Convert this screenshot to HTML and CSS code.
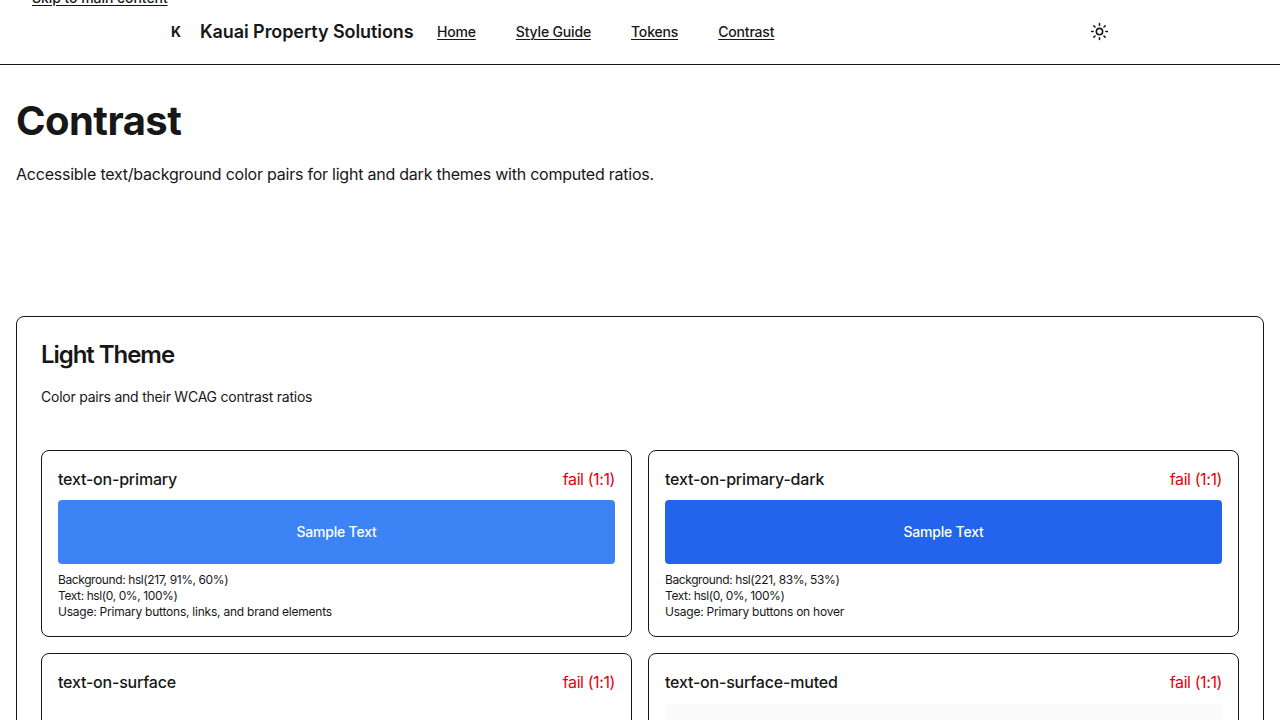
FILE: index.html
```html
<!DOCTYPE html>
<html lang="en">
<head>
<meta charset="utf-8">
<title>Contrast</title>
<link rel="stylesheet" href="styles.css">
</head>
<body>
<a class="skip-link" href="#main">Skip to main content</a>
<header class="site-header">
  <div class="header-inner">
    <span class="logo">K</span>
    <span class="brand">Kauai Property Solutions</span>
    <nav class="nav">
      <a class="nav-home" href="#">Home</a>
      <a class="nav-guide" href="#">Style Guide</a>
      <a class="nav-tokens" href="#">Tokens</a>
      <a class="nav-contrast" href="#">Contrast</a>
    </nav>
    <button class="theme-toggle" aria-label="Toggle theme">
      <svg width="19" height="19" viewBox="0 0 24 24" fill="none" stroke="currentColor" stroke-width="2" stroke-linecap="round" stroke-linejoin="round"><circle cx="12" cy="12" r="4"/><path d="M12 2v2M12 20v2M4.93 4.93l1.41 1.41M17.66 17.66l1.41 1.41M2 12h2M20 12h2M6.34 17.66l-1.41 1.41M19.07 4.93l-1.41 1.41"/></svg>
    </button>
  </div>
</header>
<main id="main" class="main">
  <div class="intro">
    <h1 class="title">Contrast</h1>
    <p class="lead">Accessible text/background color pairs for light and dark themes with computed ratios.</p>
  </div>
  <section class="panel">
    <h2 class="panel-title">Light Theme</h2>
    <p class="panel-text">Color pairs and their WCAG contrast ratios</p>
    <div class="grid">
      <article class="card">
        <div class="card-head"><span class="name">text-on-primary</span><span class="fail">fail (1:1)</span></div>
        <div class="swatch primary">Sample Text</div>
        <div class="meta"><div class="value">Background: hsl(217, 91%, 60%)</div><div class="value">Text: hsl(0, 0%, 100%)</div><div>Usage: Primary buttons, links, and brand elements</div></div>
      </article>
      <article class="card">
        <div class="card-head"><span class="name">text-on-primary-dark</span><span class="fail">fail (1:1)</span></div>
        <div class="swatch primary-dark">Sample Text</div>
        <div class="meta"><div class="value">Background: hsl(221, 83%, 53%)</div><div class="value">Text: hsl(0, 0%, 100%)</div><div>Usage: Primary buttons on hover</div></div>
      </article>
      <article class="card">
        <div class="card-head"><span class="name">text-on-surface</span><span class="fail">fail (1:1)</span></div>
        <div class="swatch surface"></div>
      </article>
      <article class="card">
        <div class="card-head"><span class="name">text-on-surface-muted</span><span class="fail">fail (1:1)</span></div>
        <div class="swatch muted"></div>
      </article>
    </div>
  </section>
</main>
</body>
</html>
```
FILE: styles.css
```css
* { box-sizing: border-box; margin: 0; padding: 0; }
html { overflow: hidden; }
body { height: 720px; overflow: hidden; background: #fff; color: #171717; font: 16px/24px Inter, "Liberation Sans", sans-serif; }
a { color: inherit; text-underline-offset: 2px; text-decoration: underline; text-decoration-thickness: 1px; }
.skip-link { position: absolute; left: 32px; top: -12px; font-size: 14px; line-height: 20px; font-weight: 500; letter-spacing: -0.05px; }
.site-header { height: 65px; border-bottom: 1px solid #171717; }
.header-inner { width: 960px; height: 64px; margin: 0 auto; display: flex; align-items: center; }
.logo { width: 32px; margin-right: 8px; text-align: center; font-size: 14px; font-weight: 700; }
.brand { width: 213px; margin-right: 24px; white-space: nowrap; font-size: 18px; font-weight: 600; letter-spacing: -0.08px; }
.nav { display: flex; gap: 40px; font-size: 14px; line-height: 20px; font-weight: 500; letter-spacing: -0.17px; }
.theme-toggle { width: 40px; height: 40px; margin-left: auto; border: 0; background: none; color: inherit; display: flex; align-items: center; justify-content: center; }
.theme-toggle svg { margin: 0 1px 1px 0; }
.main { padding: 32px 16px 0; }
.intro { height: 219px; }
.title { font-size: 40px; line-height: 48px; font-weight: 700; letter-spacing: -0.55px; }
.lead { margin-top: 17px; white-space: nowrap; letter-spacing: -0.23px; }
.panel { height: 700px; border: 1px solid #171717; border-radius: 8px; padding: 22px 24px; }
.panel-title { font-size: 24px; line-height: 32px; font-weight: 600; letter-spacing: -1.05px; }
.panel-text { margin-top: 16px; font-size: 14px; line-height: 20px; letter-spacing: -0.23px; }
.grid { margin-top: 43px; display: grid; grid-template-columns: 1fr 1fr; gap: 16px; }
.card { height: 187px; border: 1px solid #171717; border-radius: 8px; padding: 16px; }
.card-head { display: flex; justify-content: space-between; margin-bottom: 9px; white-space: nowrap; }
.card:nth-child(n+3) .card-head { margin-bottom: 10px; }
.name { font-weight: 500; letter-spacing: -0.2px; }
.fail { color: #e7000b; letter-spacing: -0.4px; }
.swatch { height: 64px; border-radius: 4px; display: flex; align-items: center; justify-content: center; color: #fff; font-size: 14px; font-weight: 500; letter-spacing: -0.2px; }
.primary { background: hsl(217, 91%, 60%); }
.primary-dark { background: hsl(221, 83%, 53%); }
.surface { background: #fff; }
.muted { background: #fafafa; }
.meta { margin-top: 8px; font-size: 12px; line-height: 16px; letter-spacing: -0.23px; white-space: nowrap; }
.value { letter-spacing: -0.4px; }
```
